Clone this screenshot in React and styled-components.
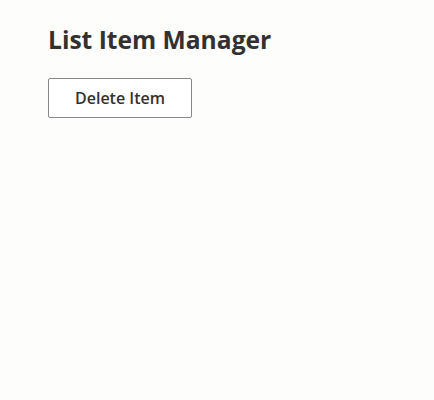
import styled, { createGlobalStyle } from 'styled-components'

const GlobalStyle = createGlobalStyle`
  html, body {
    margin: 0;
    background: #fdfdfc;
    font-family: "Open Sans", "Noto Sans", sans-serif;
    color: #333;
  }
`

const Page = styled.main`
  padding: 24px 48px;
  min-height: 400px;
  box-sizing: border-box;
`

const Title = styled.h1`
  margin: 0 0 22px;
  font-size: 24.6px;
  font-weight: 700;
  line-height: 32px;
  color: #323130;
`

const Button = styled.button`
  width: 144px;
  height: 40px;
  padding: 0 16px;
  background: #fff;
  border: 1px solid #8a8886;
  border-radius: 2px;
  font-family: inherit;
  font-size: 16px;
  font-weight: 600;
  color: #323130;
  cursor: pointer;
`

const App = () => {
  return (
    <Page>
      <GlobalStyle />
      <Title>List Item Manager</Title>
      <Button>Delete Item</Button>
    </Page>
  )
}

export default App
